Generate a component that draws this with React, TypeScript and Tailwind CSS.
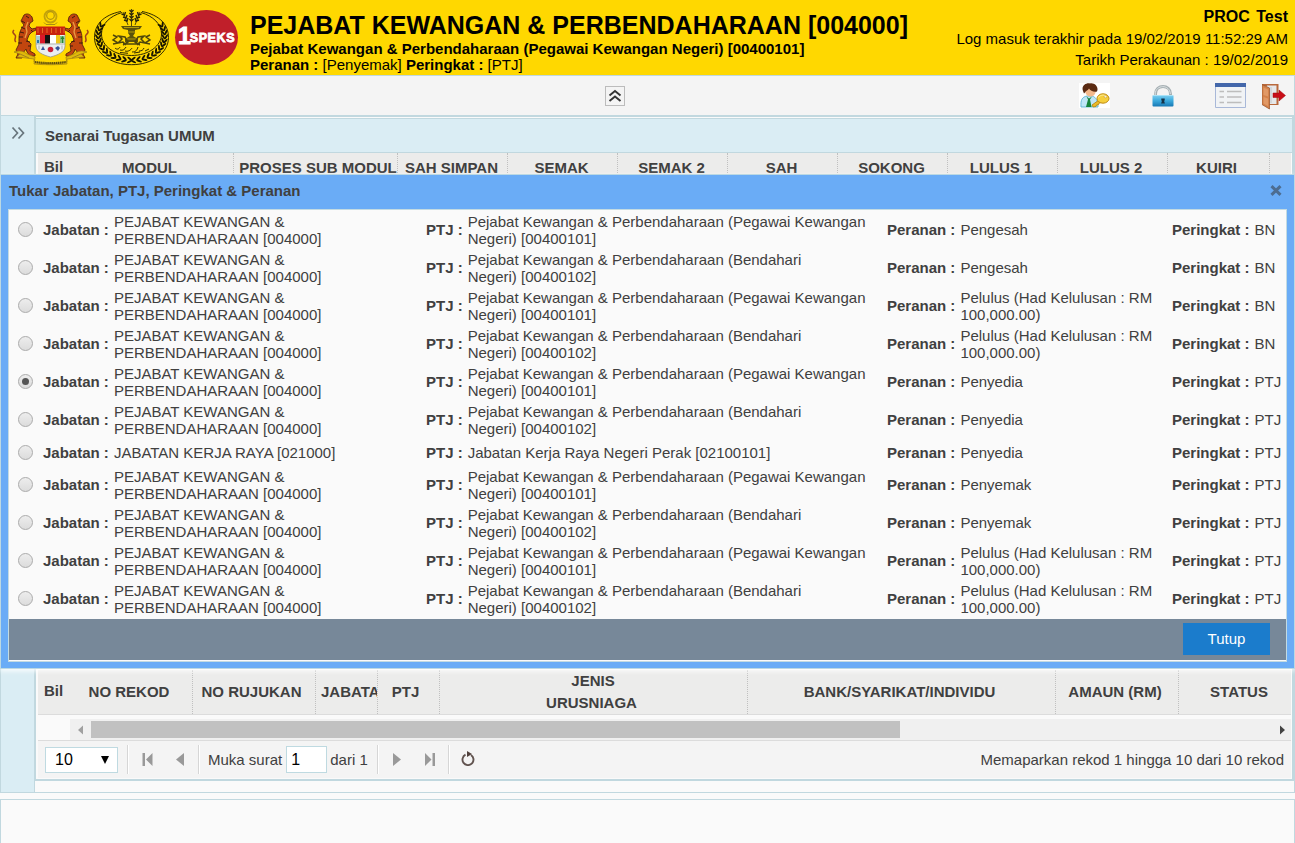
import React from "react";

const GAZ = "PEJABAT KEWANGAN & PERBENDAHARAAN [004000]";
const PEG = "Pejabat Kewangan & Perbendaharaan (Pegawai Kewangan Negeri)\u00a0[00400101]";
const BEN = "Pejabat Kewangan & Perbendaharaan (Bendahari Negeri)\u00a0[00400102]";
const PEL = "Pelulus (Had Kelulusan : RM 100,000.00)";

type Role = { jabatan: string; ptj: string; peranan: string; peringkat: string; checked?: boolean; single?: boolean };

const roles: Role[] = [
  { jabatan: GAZ, ptj: PEG, peranan: "Pengesah", peringkat: "BN" },
  { jabatan: GAZ, ptj: BEN, peranan: "Pengesah", peringkat: "BN" },
  { jabatan: GAZ, ptj: PEG, peranan: PEL, peringkat: "BN" },
  { jabatan: GAZ, ptj: BEN, peranan: PEL, peringkat: "BN" },
  { jabatan: GAZ, ptj: PEG, peranan: "Penyedia", peringkat: "PTJ", checked: true },
  { jabatan: GAZ, ptj: BEN, peranan: "Penyedia", peringkat: "PTJ" },
  { jabatan: "JABATAN KERJA RAYA [021000]", ptj: "Jabatan Kerja Raya Negeri Perak [02100101]", peranan: "Penyedia", peringkat: "PTJ", single: true },
  { jabatan: GAZ, ptj: PEG, peranan: "Penyemak", peringkat: "PTJ" },
  { jabatan: GAZ, ptj: BEN, peranan: "Penyemak", peringkat: "PTJ" },
  { jabatan: GAZ, ptj: PEG, peranan: PEL, peringkat: "PTJ" },
  { jabatan: GAZ, ptj: BEN, peranan: PEL, peringkat: "PTJ" },
];

function Tiger() {
  return (
    <g>
      <path d="M4 34C1 32 5 29 3 27S0 24 2 22" fill="none" stroke="#a3451a" strokeWidth="1.500" />
      <path d="M12 7c3-2 6-1 8 2l1 4-3 2-1 3 3 3 4-1v2l-4 2-3 3-2 5 4 4-1 7 5 3v2h-5l-3-4-1-3-3 4-1 5H4l2-4-2-4 3-6 0-5c0-5 1-9 5-14l-3-4z" fill="#c2460f" stroke="#5a2410" strokeWidth=".9" />
      <path d="M10 13l3 2M9 19l4 2M8 24l4 1M7 29l4 0M6 35l4 0M14 33l4 1M16 38l3 0M19 22l2 2M14 8l3 2" stroke="#3b1b10" strokeWidth="1" />
      <path d="M16 14l-2 5 1 5-2 6" fill="none" stroke="#e99b45" strokeWidth="1.300" />
    </g>
  );
}

function MalaysiaCrest() {
  return (
    <svg width="78" height="58" viewBox="0 0 78 58" className="shrink-0">
      <circle cx="38.500" cy="8.500" r="6" fill="none" stroke="#c2a20c" strokeWidth="1.800" />
      <circle cx="38.500" cy="7.500" r="3.800" fill="#ffd800" stroke="#b0930f" strokeWidth="1.200" />
      <path d="M32 14.500l2 2h9l2-2" stroke="#a88d10" strokeWidth="1" fill="none" />
      <Tiger />
      <g transform="translate(77 0) scale(-1 1)"><Tiger /></g>
      <path d="M24 26h29v12c0 6-7 9-14.500 11C31 47 24 44 24 38z" fill="#e9eef0" stroke="#8d8d8d" strokeWidth=".7" />
      <path d="M24 18.500h29V27H24z" fill="#c9210f" />
      <path d="M26 20v5M30.500 20v5M35 20v5M39.500 20v5M44 20v5M48.500 20v5M52 20v5" stroke="#ea7b2b" strokeWidth=".8" />
      <path d="M28 27h5v8.500h-5z" fill="#d8182a" />
      <path d="M33 27h5v8.500h-5z" fill="#111" />
      <path d="M38 27h6v8.500h-6z" fill="#fff" />
      <path d="M44 27h4v8.500h-4z" fill="#efc61a" />
      <path d="M24 28h4v7.500h-4z" fill="#a6cbd0" />
      <path d="M25 32h2v3h-2z" fill="#2c78ae" />
      <path d="M48 28h4.500v7H48z" fill="#83c084" />
      <path d="M50.500 28l-2 3h4zM50 31h1v4h-1z" fill="#288434" />
      <path d="M31 38l-2 4h4zM46 38l-3 2 3 3 2-3z" fill="#34549a" />
      <circle cx="38.500" cy="41.500" r="2.800" fill="#c92037" />
      <path d="M27 37.500v4M50 37.500v4" stroke="#b2b2b2" />
      <path d="M24 36h29" stroke="#8d8d8d" strokeWidth=".6" />
      <path d="M2 44c6-2 9-1 13 2l8 3-1 7c10 1 23 1 33 0l-1-7 8-3c4-3 7-4 13-2l-6 2 3 3-9 1-8 1v3c-12 2-21 2-33 0v-3l-8-1-9-1 3-3z" fill="#e0b90b" stroke="#9e8012" strokeWidth=".7" />
      <path d="M23 54c10 1.500 21 1.500 31 0" fill="none" stroke="#60500f" strokeWidth="2.200" strokeDasharray="1.300 .6" />
      <path d="M8 46l9 4M69 46l-9 4" stroke="#a4851a" strokeWidth="1" />
    </svg>
  );
}

const leafAngles = Array.from({ length: 26 }, (_, i) => -28 + i * 9.44);

function PerakCrest() {
  return (
    <svg width="77" height="58" viewBox="0 0 77 58" className="shrink-0">
      <path d="M28 3.500C10 7 1.500 17 1.500 29.500 1.500 45 18 56.700 38.500 56.700S75.500 45 75.500 29.500C75.500 17 67 7 49 3.500" fill="none" stroke="#171500" strokeWidth=".9" />
      <path d="M29 4.500C17 8 8.500 16 8.500 26c0 12 13 21.500 30 21.500S68.500 38 68.500 26c0-10-8.500-18-20.500-21.500" fill="none" stroke="#171500" strokeWidth=".9" />
      {leafAngles.map((a) => {
        const t = (a * Math.PI) / 180;
        const x = 38.5 + 33.3 * Math.cos(t);
        const y = 27.7 + 24.5 * Math.sin(t);
        const turn = a < 90 ? a - 90 : a + 90;
        return (
          <g key={a} transform={`translate(${x} ${y}) rotate(${turn})`}>
            <ellipse cx="0" cy="-1.700" rx="2.900" ry="1" fill="#171500" transform="rotate(-32)" />
            <ellipse cx="0" cy="1.700" rx="2.900" ry="1" fill="#171500" transform="rotate(32)" />
          </g>
        );
      })}
      <path d="M38.500 1v17M30 4l5 13M47 4l-5 13" stroke="#2a260a" strokeWidth=".8" fill="none" />
      <path d="M36.500 2l2 2 2-2M36.500 5l2 2 2-2M36.500 8l2 2 2-2M36.500 11l2 2 2-2M28.500 6l3 1 1-3M30 9l3 1 1-3M31 12l3 1 1-3M48.500 6l-3 1-1-3M47 9l-3 1-1-3M46 12l-3 1-1-3" stroke="#2a260a" strokeWidth="1.400" fill="none" />
      <path d="M28 18h21l-2 3-5 1v3l-2 3 5 3v3H32v-3l5-3-2-3v-3l-5-1z" fill="#5c530b" />
      <path d="M31 19.500h15M35 24h7M33 31h11" stroke="#c9ad0b" strokeWidth=".8" />
      <path d="M20 27l4 2-4 3 5 3 4-4-3-3 6 1 3 5-5 3M57 27l-4 2 4 3-5 3-4-4 3-3-6 1-3 5 5 3M20 36l10-2 3 3M57 36l-10-2-3 3M30 36h17" fill="none" stroke="#4e460b" strokeWidth="1.500" />
      <path d="M22 40c2 2 4 1 5-1m0 3c3 1 5-1 6-3m-1 4c3 1 6-1 7-3m0 4c4 0 5-2 6-5m1 4c3 0 4-1 5-3m1 3l4-2M27 44.500l8 .8M41 45l6-1" fill="none" stroke="#171500" strokeWidth=".9" />
    </svg>
  );
}

function UserKey() {
  return (
    <svg width="31" height="25" viewBox="0 0 31 25">
      <path fill="#fff" d="M0 0h31v25H0z" />
      <path d="M2 24c-.5-7 1-10 6-11h5c4 1 6 5 6 11z" fill="#bfe6f7" stroke="#5eb4d4" strokeWidth=".9" />
      <ellipse cx="11.500" cy="8" rx="5.300" ry="5.500" fill="#f4b98c" />
      <path d="M4 8C2 3 7-.5 11 .5c5-1 9 4 7 8-3 1-7-1-8-3-1 2-3 2-4 4l-1 1z" fill="#5a2a12" />
      <path d="M7.500 13.500l2.500 2 3-2-2 3 1.500 7.500H7l2-7.500z" fill="#16853c" />
      <path d="M20 17l-7 5 1 2 3-.5.5-1.500 2-.3.500-1.500 2.500-1z" fill="#edba26" stroke="#b0800c" strokeWidth=".8" />
      <ellipse cx="24" cy="15.500" rx="6" ry="4.700" fill="#f6cf3d" stroke="#c08c12" strokeWidth="1" />
      <path d="M19.500 14.500c2-3 6-3 8-1" stroke="#fff0a0" fill="none" />
      <ellipse cx="26.500" cy="13.800" rx="1.500" ry="1" fill="#fff" stroke="#c08c12" strokeWidth=".5" />
    </svg>
  );
}

function Lock() {
  return (
    <svg width="22" height="22" viewBox="0 0 22 22">
      <defs>
        <linearGradient id="lockBody" x1="0" y1="0" x2="0" y2="1"><stop stopColor="#7fd0f1" /><stop offset=".5" stopColor="#3ba9dc" /><stop offset="1" stopColor="#1778b4" /></linearGradient>
      </defs>
      <path d="M3.500 10.500V9C3.500-1 18.500-1 18.500 9v1.500" fill="none" stroke="#a5afb3" strokeWidth="3" />
      <path d="M3.200 10V9C3.500-.8 18-.8 18.300 9" fill="none" stroke="#dde3e5" strokeWidth="1" />
      <rect x=".5" y="10" width="21" height="11.500" rx="1" fill="url(#lockBody)" />
      <path d="M1 10.500h20" stroke="#a8e2f7" />
      <path d="M9.300 13.500h3.400v1.800l-.6.700.8 2.500H9.100l.8-2.500-.6-.7z" fill="#153348" />
    </svg>
  );
}

function ListIcon() {
  return (
    <svg width="31" height="25" viewBox="0 0 31 25">
      <path d="M.5.5h30v24H.5z" fill="#f1f3f5" stroke="#a8b8d8" />
      <path d="M0 0h31v4H0z" fill="#4367aa" />
      <path d="M4.500 8.500h4.500M12 8.500h14.500M4.500 14h4.500M12 14h14.500M4.500 19.500h4.500M12 19.500h14.500" stroke="#bdbdbd" strokeWidth="1.500" />
    </svg>
  );
}

function Door() {
  return (
    <svg width="25" height="26" viewBox="0 0 25 26">
      <path d="M0 0h16.500v21H7V2H0z" fill="#b9693c" />
      <path d="M5 1.500h9.500V20H7z" fill="#e6e8ea" />
      <path d="M9 3v16" stroke="#c2c8cc" />
      <path d="M0 .5l7.500 3.500v21L0 20.500z" fill="#d5824a" stroke="#9c5830" strokeWidth=".8" />
      <path d="M1.500 3.500l4.500 2v7l-4.500-1.500zM1.500 13l4.500 1.500v7.500l-4.500-2.500z" fill="#e6a272" opacity=".7" />
      <path d="M11 9h6V6l6.500 5.500L17 17v-3.500h-6z" fill="#c80d17" stroke="#a30d12" strokeWidth=".5" />
    </svg>
  );
}

function HeadCell({ w, children }: { w: string; children?: React.ReactNode }) {
  return <div className={`${w} flex shrink-0 items-center justify-center overflow-hidden whitespace-nowrap border-r border-dotted border-[#c0c0c0] text-center`}>{children}</div>;
}

function Field({ w, label, children }: { w: string; label: string; children: React.ReactNode }) {
  return (
    <div className={`${w} flex shrink-0 items-center`}>
      <span className="shrink-0 whitespace-nowrap pb-px font-bold">{label} :</span>
      <span className="pb-px pl-[5px]">{children}</span>
    </div>
  );
}

function Radio({ checked }: { checked?: boolean }) {
  return (
    <span className="flex h-[15px] w-[15px] shrink-0 items-center justify-center rounded-full border border-[#ababab] bg-linear-to-b from-[#ededed] to-[#dcdcdc]">
      {checked && <span className="h-[7px] w-[7px] rounded-full bg-[#555]" />}
    </span>
  );
}

function Dialog() {
  return (
    <section className="absolute top-[174px] left-0 flex h-[495px] w-[1295px] flex-col border border-[#bcd9e3] bg-[#6aacf6] shadow-[0_2px_5px_rgba(255,255,255,0.9)]">
      <div className="flex h-[34px] shrink-0 items-center justify-between pr-[12px] pb-[3px] pl-2">
        <span className="font-bold">Tukar Jabatan, PTJ, Peringkat &amp; Peranan</span>
        <svg width="12" height="11" viewBox="0 0 12 11"><path d="M1.500 1.200l9 8.600M10.500 1.200l-9 8.600" stroke="#4d6d91" strokeWidth="3" /></svg>
      </div>
      <div className="mx-[7px] flex h-[453px] shrink-0 flex-col border border-[#c3dbe2] bg-[#fafafa]">
        <div className="h-[409px] shrink-0 pt-px">
          {roles.map((r, i) => (
            <div key={i} className={`flex items-center pl-[9px] ${r.single ? "h-[27px]" : "h-[38px]"}`}>
              <span className="flex w-[25px] shrink-0 pb-px"><Radio checked={r.checked} /></span>
              <Field w="w-[383px]" label="Jabatan"><span className={`block ${r.single ? "w-[260px]" : "w-[230px]"}`}>{r.jabatan}</span></Field>
              <Field w="w-[461px]" label="PTJ"><span className="block w-[405px]">{r.ptj}</span></Field>
              <Field w="w-[285px]" label="Peranan"><span className="block w-[205px]">{r.peranan}</span></Field>
              <Field w="w-[114px]" label="Peringkat">{r.peringkat}</Field>
            </div>
          ))}
        </div>
        <div className="flex h-[41px] shrink-0 justify-end bg-[#778899] pt-1 pr-4">
          <button className="h-8 w-[87px] bg-[#1b7ccc] pb-[2px] text-white">Tutup</button>
        </div>
      </div>
    </section>
  );
}

function Divider() {
  return <span className="h-[29px] w-[2px] shrink-0 border-l border-[#d6d6d6] bg-white" />;
}

export default function App() {
  return (
    <div className="relative flex h-[843px] w-[1295px] flex-col overflow-hidden bg-[#fafafa] font-['Liberation_Sans',Arial,sans-serif] text-[15px] leading-[17px] text-[#404040]">
      <header className="flex h-[75px] shrink-0 bg-[#ffd800] text-black">
        <div className="flex h-[75px] w-[250px] shrink-0 pt-2 pl-3">
          <MalaysiaCrest />
          <div className="ml-[3px]"><PerakCrest /></div>
          <div className="mt-[2px] ml-[5px] flex h-[55px] w-[63px] items-center justify-center rounded-[50%] bg-[#c01f2a] font-black text-white">
            <span className="pb-[3px] text-[23px] leading-[24px] tracking-[-1px] [-webkit-text-stroke:1px_white]">1</span><span className="pt-[2px] text-[12.500px] tracking-[0.600px] [-webkit-text-stroke:0.800px_white]">SPEKS</span>
          </div>
        </div>
        <div className="flex grow flex-col pt-[11px] font-bold">
          <h1 className="text-[25px] leading-[29px]">PEJABAT KEWANGAN &amp; PERBENDAHARAAN [004000]</h1>
          <p className="pt-px leading-[16px]">Pejabat Kewangan &amp; Perbendaharaan (Pegawai Kewangan Negeri) [00400101]</p>
          <p className="leading-[16px]">Peranan : <span className="font-normal">[Penyemak]</span> Peringkat : <span className="font-normal">[PTJ]</span></p>
        </div>
        <div className="pt-[6px] pr-[7px] text-right leading-[22px]">
          <p className="text-[16px] font-bold [word-spacing:2px]">PROC Test</p>
          <p>Log masuk terakhir pada 19/02/2019 11:52:29 AM</p>
          <p className="leading-[20px]">Tarikh Perakaunan : 19/02/2019</p>
        </div>
      </header>

      <nav className="flex h-[41px] shrink-0 border border-[#c1d8df] bg-[#f4f4f4]">
        <button className="mt-[10px] ml-[604px] flex h-5 w-5 items-center justify-center border border-[#bcbcbc]">
          <svg width="14" height="14" viewBox="0 0 14 14" fill="none" stroke="#333" strokeWidth="1.900"><path d="M1.500 6.500L7 2l5.500 4.500M1.500 12L7 7.500l5.500 4.500" /></svg>
        </button>
        <div className="mt-[7px] ml-[454px]"><UserKey /></div>
        <div className="mt-[9px] ml-[42px]"><Lock /></div>
        <div className="mt-[7px] ml-[41px]"><ListIcon /></div>
        <div className="mt-2 ml-4"><Door /></div>
      </nav>

      <main className="flex h-[677px] shrink-0 border-x border-b border-[#c1d8df]">
        <aside className="flex w-[34px] shrink-0 justify-center border-r border-[#c1d8df] bg-[#daedf4] pt-[10px]">
          <svg width="14" height="14" viewBox="0 0 14 14" fill="none" stroke="#68757c" strokeWidth="1.700"><path d="M1.500 1.500L6.500 7l-5 5.500M7.500 1.500l5 5.500-5 5.500" /></svg>
        </aside>
        <section className="flex h-[665px] w-[1259px] shrink-0 flex-col border-t border-r-2 border-b-2 border-l border-[#c1d8df] bg-[#fafafa]">
          <div className="mt-px flex h-[35px] shrink-0 items-center border-y border-[#c1d8df] bg-[#daedf4] pb-px pl-[9px] font-bold">Senarai Tugasan UMUM</div>
          <div className="mr-px ml-[2px] flex h-[30px] shrink-0 bg-[#ececeb] font-bold">
            <div className="w-[33px] shrink-0 pt-[5px] pl-[6px]">Bil</div>
            <HeadCell w="w-[163px] pr-[5px] pb-[2px]">MODUL</HeadCell>
            <HeadCell w="w-[164px] pl-[5px] pb-[2px]">PROSES SUB MODUL</HeadCell>
            <HeadCell w="w-[110px] pr-[2px] pb-[2px]">SAH SIMPAN</HeadCell>
            <HeadCell w="w-[110px] pr-[2px] pb-[2px]">SEMAK</HeadCell>
            <HeadCell w="w-[110px] pr-[2px] pb-[2px]">SEMAK 2</HeadCell>
            <HeadCell w="w-[110px] pr-[2px] pb-[2px]">SAH</HeadCell>
            <HeadCell w="w-[110px] pr-[2px] pb-[2px]">SOKONG</HeadCell>
            <HeadCell w="w-[110px] pr-[3px] pb-[2px]">LULUS 1</HeadCell>
            <HeadCell w="w-[110px] pr-[3px] pb-[2px]">LULUS 2</HeadCell>
            <HeadCell w="w-[102px] pr-[4px] pb-[2px]">KUIRI</HeadCell>
          </div>
          <div className="h-[487px] shrink-0" />
          <div className="mr-px ml-[2px] flex h-[45px] shrink-0 border-b border-[#dcdcdc] bg-[#ececeb] font-bold">
            <div className="w-[33px] shrink-0 pt-[12px] pl-[6px]">Bil</div>
            <HeadCell w="w-[122px] pr-[5px] pb-[2px]">NO REKOD</HeadCell>
            <HeadCell w="w-[123px] pr-[5px] pb-[2px]">NO RUJUKAN</HeadCell>
            <div className="flex w-[62px] shrink-0 items-center overflow-hidden border-r border-dotted border-[#c0c0c0] pb-[2px] pl-[5px]">JABATAN</div>
            <HeadCell w="w-[62px] pr-[6px] pb-[2px]">PTJ</HeadCell>
            <HeadCell w="w-[308px] pr-[4px] leading-[22px]"><span><span className="pl-[3px]">JENIS</span><br />URUSNIAGA</span></HeadCell>
            <HeadCell w="w-[308px] pr-[4px] pb-[2px]">BANK/SYARIKAT/INDIVIDU</HeadCell>
            <HeadCell w="w-[123px] pr-[4px] pb-[2px]">AMAUN (RM)</HeadCell>
            <div className="flex grow items-center justify-center pb-[2px] pl-[8px]">STATUS</div>
          </div>
          <div className="mt-1 mr-px ml-[34px] flex h-[21px] shrink-0 items-center bg-[#f0f0f0]">
            <svg width="21" height="10" viewBox="0 0 21 10"><path d="M13 .5v9L8 5z" fill="#a0a0a0" /></svg>
            <div className="h-[17px] w-[809px] bg-[#c1c1c1]" />
            <svg className="ml-auto" width="13" height="10" viewBox="0 0 13 10"><path d="M2 .5v9L7 5z" fill="#444" /></svg>
          </div>
          <div className="mr-px ml-[2px] flex h-[38px] shrink-0 items-center border-t border-[#dcdcdc] bg-[#f4f4f4]">
            <div className="ml-[7px] flex h-[26px] w-[73px] shrink-0 items-center justify-between border border-[#bfdae1] bg-white pr-2 pl-[9px] text-[16px] text-black"><span>10</span><svg width="8" height="8" viewBox="0 0 8 8"><path d="M0 0h8L4 8z" /></svg></div>
            <span className="w-[9px]" /><Divider />
            <svg className="ml-[13px]" width="12" height="13" viewBox="0 0 12 13" fill="#999"><path d="M.5 0h2.500v13H.5zM10.500 0v13L4 6.500z" /></svg>
            <svg className="ml-[22px]" width="9" height="13" viewBox="0 0 9 13" fill="#999"><path d="M8 0v13L0 6.500z" /></svg>
            <span className="w-[13px]" /><Divider />
            <span className="ml-2">Muka surat</span>
            <span className="ml-[4px] flex h-[27px] w-[41px] items-center border border-[#bfdae1] bg-white pl-1 text-[16px] text-black">1</span>
            <span className="ml-[3px]">dari 1</span>
            <span className="w-[9px]" /><Divider />
            <svg className="ml-[14px]" width="9" height="13" viewBox="0 0 9 13" fill="#999"><path d="M0 0v13l8-6.500z" /></svg>
            <svg className="ml-[23px]" width="11" height="13" viewBox="0 0 11 13" fill="#999"><path d="M0 0v13l6.500-6.500zM7.500 0H10v13H7.500z" /></svg>
            <span className="w-[12px]" /><Divider />
            <svg className="mb-[2px] ml-[11px]" width="14" height="15" viewBox="0 0 14 15"><path d="M10 4a5.500 5.500 0 1 1-5.500-.3" fill="none" stroke="#61534f" strokeWidth="1.900" /><path d="M6 0l5 3-5 3z" fill="#50403c" /></svg>
            <span className="mr-[7px] ml-auto">Memaparkan rekod 1 hingga 10 dari 10 rekod</span>
          </div>
        </section>
      </main>
      <footer className="mt-[6px] h-[60px] shrink-0 border border-[#c1d8df] bg-[#fafafa]" />
      <Dialog />
    </div>
  );
}
